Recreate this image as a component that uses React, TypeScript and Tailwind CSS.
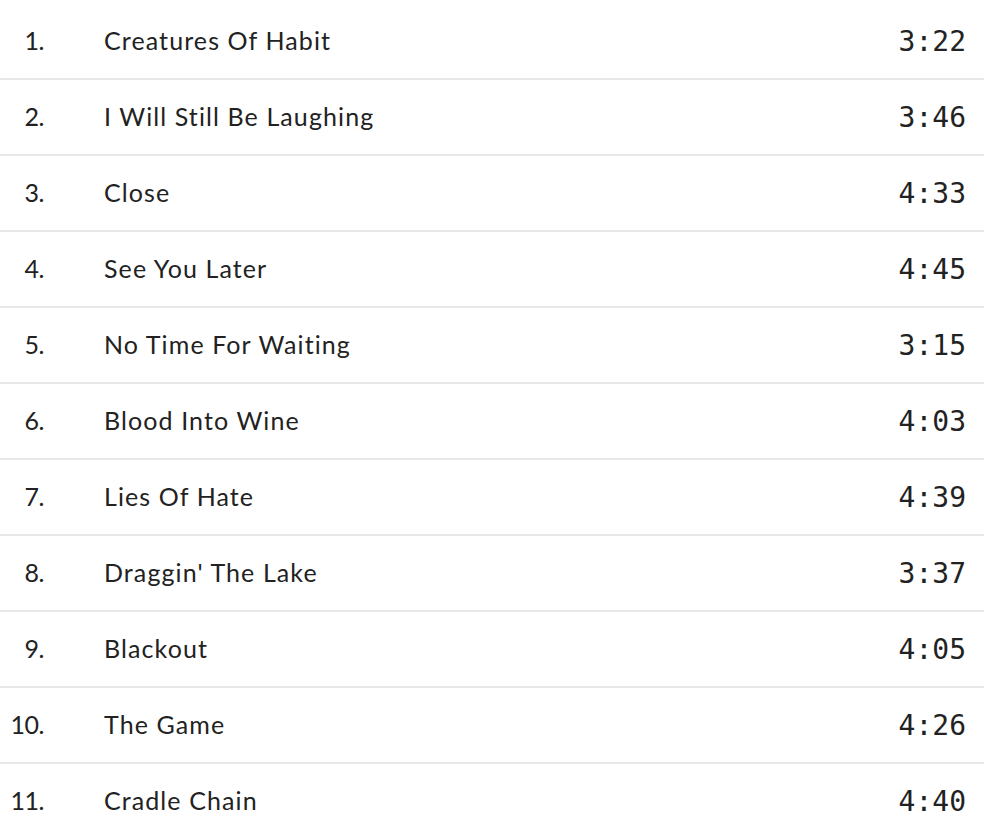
const tracks = [
  { n: 1, title: 'Creatures Of Habit', time: '3:22' },
  { n: 2, title: 'I Will Still Be Laughing', time: '3:46' },
  { n: 3, title: 'Close', time: '4:33' },
  { n: 4, title: 'See You Later', time: '4:45' },
  { n: 5, title: 'No Time For Waiting', time: '3:15' },
  { n: 6, title: 'Blood Into Wine', time: '4:03' },
  { n: 7, title: 'Lies Of Hate', time: '4:39' },
  { n: 8, title: "Draggin' The Lake", time: '3:37' },
  { n: 9, title: 'Blackout', time: '4:05' },
  { n: 10, title: 'The Game', time: '4:26' },
  { n: 11, title: 'Cradle Chain', time: '4:40' },
]

export default function App() {
  return (
    <div className="w-[984px] h-[834px] overflow-hidden bg-white pt-[4px] text-[#222]">
      {tracks.map(t => (
        <div
          key={t.n}
          className="flex items-center h-[76px] border-b-2 border-[#e8e8e8]"
        >
          <span className="w-[44px] text-right font-['Lato',sans-serif] text-[25px] tracking-[-0.5px]">
            {t.n}.
          </span>
          <span className="ml-[60px] flex-1 font-['Lato',sans-serif] text-[25px] tracking-[1.1px]">
            {t.title}
          </span>
          <span className="mr-[18px] pt-[2px] font-['DejaVu_Sans_Mono',monospace] text-[28px]">
            {t.time}
          </span>
        </div>
      ))}
    </div>
  )
}
